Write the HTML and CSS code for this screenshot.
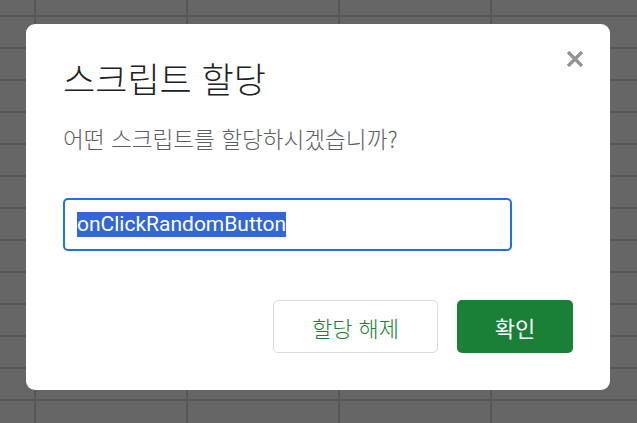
FILE: index.html
```html
<!DOCTYPE html>
<html lang="ko">
<head>
<meta charset="utf-8">
<link rel="stylesheet" href="styles.css">
</head>
<body>
<div class="dialog">
  <h1 class="title">스크립트 할당</h1>
  <button class="close" aria-label="닫기">
    <svg width="18" height="16" viewBox="0 0 18 16"><path d="M2 1 L16 15 M16 1 L2 15" stroke="#939393" stroke-width="3.4"/></svg>
  </button>
  <p class="desc">어떤 스크립트를 할당하시겠습니까?</p>
  <div class="field"><span class="sel">onClickRandomButton</span></div>
  <div class="actions">
    <button class="btn btn-secondary">할당 해제</button>
    <button class="btn btn-primary">확인</button>
  </div>
</div>
</body>
</html>
```
FILE: styles.css
```css
html, body {
  margin: 0;
  height: 100%;
}
body {
  background-color: #666666;
  background-image:
    linear-gradient(to right, #575757 2px, transparent 2px),
    linear-gradient(to bottom, #575757 2px, transparent 2px);
  background-size: 152px 100%, 100% 32px;
  background-position: 34px 0, 0 15px;
  padding: 24px 0 0 26px;
  box-sizing: border-box;
  font-family: "Noto Sans CJK KR", "Noto Sans", sans-serif;
}
.dialog {
  position: relative;
  width: 584px;
  height: 366px;
  box-sizing: border-box;
  background: #fff;
  border-radius: 9px;
  padding: 32px 37px 0 37px;
  display: flex;
  flex-direction: column;
}
.title {
  margin: 0;
  font-weight: 300;
  font-size: 35px;
  line-height: 44px;
  color: #202124;
}
.close {
  position: absolute;
  top: 27px;
  right: 26px;
  border: 0;
  background: none;
  padding: 0;
  width: 18px;
  height: 16px;
  display: flex;
}
.desc {
  margin: 24px 0 0 0;
  font-weight: 300;
  font-size: 22.6px;
  line-height: 30px;
  color: #5a5e63;
}
.field {
  margin-top: 44px;
  width: 449px;
  height: 53px;
  box-sizing: border-box;
  border: 2px solid #1a73e8;
  border-radius: 5px;
  padding: 0 12px;
  display: flex;
  align-items: center;
  font-family: Roboto, "Noto Sans", sans-serif;
  font-size: 21px;
}
.sel {
  background: #3367d6;
  color: #fff;
  line-height: 25px;
}
.actions {
  margin-top: 49px;
  display: flex;
  justify-content: flex-end;
  gap: 19px;
}
.btn {
  height: 53px;
  border-radius: 5px;
  font-family: "Noto Sans CJK KR", sans-serif;
  font-weight: 300;
  font-size: 22px;
  padding: 0;
}
.btn-secondary {
  width: 165px;
  background: #fff;
  border: 1px solid #dadce0;
  color: #188038;
}
.btn-primary {
  width: 116px;
  background: #1a7f37;
  border: 0;
  color: #fff;
  font-weight: 400;
}
```
